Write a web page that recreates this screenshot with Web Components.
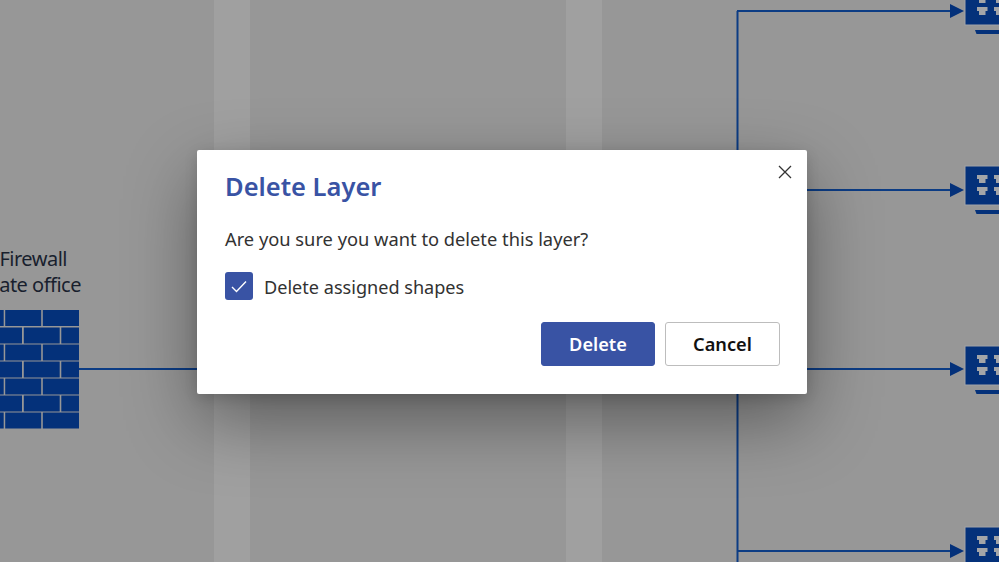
<!DOCTYPE html>
<html><head><meta charset="utf-8"><style>html,body{margin:0;padding:0;background:#979797}</style></head><body>
<x-stage>
  <x-diagram></x-diagram>
  <x-dialog heading="Delete Layer">
    Are you sure you want to delete this layer?
    <x-checkbox slot="option">Delete assigned shapes</x-checkbox>
    <x-button slot="actions" variant="primary">Delete</x-button>
    <x-button slot="actions" style="width:115px">Cancel</x-button>
  </x-dialog>
</x-stage>
<script>
const FONT = '"Noto Sans","Open Sans",sans-serif';
class XStage extends HTMLElement{constructor(){super();this.attachShadow({mode:'open'}).innerHTML=`<style>
:host{display:block;position:relative;width:999px;height:562px;overflow:hidden;background:#979797;font-family:${FONT}}
</style><slot></slot>`}}
customElements.define('x-stage',XStage);

function bricks(){
  const ys=[310,327.5,344.5,361.5,378.5,395.5,412.5],h=16;
  const odd=[[-20,3.7],[5.2,41.2],[42.8,79]],even=[[-20,22],[23.8,59.7],[61.3,79]];
  return ys.map((y,i)=>(i%2?even:odd).map(([a,b])=>`<rect x="${a}" y="${y}" width="${b-a}" height="${h}"/>`).join('')).join('');
}
function server(top){
  const p=(x,y)=>`<path d="M${x} ${y}h10.5v4h-2v4h-6.5v-4h-2z" fill="#a3a5a8"/>`;
  return `<g><rect x="965" y="${top}" width="40" height="39" fill="#04317a" stroke="#a2a4a8" stroke-width="1"/>
  <path d="M975 ${top+44}h30v4h-28.5z" fill="#04317a"/>
  ${p(977,top+9)}${p(994,top+9)}${p(977,top+21)}${p(994,top+21)}</g>`;
}
function branch(y,top){
  return `<path d="M737 ${y}H952" stroke="#0c3c84" stroke-width="2" fill="none"/>
  <path d="M950 ${y-7}L964 ${y}L950 ${y+7}z" fill="#04317a"/>`+server(top);
}
class XDiagram extends HTMLElement{constructor(){super();this.attachShadow({mode:'open'}).innerHTML=`<style>
:host{display:block;position:absolute;inset:0;color:#191f2e;font-size:20px;letter-spacing:-.5px;line-height:26px}
svg{position:absolute;inset:0;display:block}
.label{position:absolute;left:-40px;top:246px;width:121px;text-align:right;white-space:nowrap}
.label div:first-child{padding-right:14px}
</style>
<svg width="999" height="562" viewBox="0 0 999 562">
  <rect x="214" y="0" width="36" height="562" fill="#a0a0a0"/>
  <rect x="566" y="0" width="36" height="562" fill="#a0a0a0"/>
  <path d="M737.5 11V562" stroke="#0c3c84" stroke-width="2" fill="none"/>
  <path d="M79 369H400" stroke="#0c3c84" stroke-width="2" fill="none"/>
  ${branch(11,-14)}${branch(190,166)}${branch(369,346)}${branch(551,527)}
  <g fill="#04317a">${bricks()}</g>
</svg>
<div class="label"><div>Firewall</div><div>ate office</div></div>`}}
customElements.define('x-diagram',XDiagram);

class XDialog extends HTMLElement{constructor(){super();this.attachShadow({mode:'open'}).innerHTML=`<style>
:host{display:flex;flex-direction:column;box-sizing:border-box;position:absolute;left:197px;top:150px;width:610px;height:244px;padding:19px 27px 28px 28px;background:#fff;border-radius:2px;box-shadow:0 26px 70px rgba(0,0,0,.4),0 4px 14px rgba(0,0,0,.14);color:#323232}
h2{margin:0;font-size:25.5px;line-height:34px;font-weight:600;color:#3953a4}
.body{margin-top:22px;font-size:18.3px;line-height:28px}
.opt{margin-top:19px}
.act{margin-top:22px;display:flex;justify-content:flex-end;gap:10px}
button{position:absolute;right:15px;top:15px;width:14px;height:14px;padding:0;border:0;background:none;display:block}
svg{display:block}
</style>
<h2></h2>
<div class="body"><slot></slot></div>
<div class="opt"><slot name="option"></slot></div>
<div class="act"><slot name="actions"></slot></div>
<button aria-label="Close"><svg width="14" height="14" viewBox="0 0 14 14"><path d="M1 1L13 13M13 1L1 13" stroke="#333" stroke-width="1.3" fill="none"/></svg></button>`;
this.shadowRoot.querySelector('h2').textContent=this.getAttribute('heading')}}
customElements.define('x-dialog',XDialog);

class XCheckbox extends HTMLElement{constructor(){super();this.attachShadow({mode:'open'}).innerHTML=`<style>
:host{display:flex;align-items:center;gap:11px;font-size:18.1px;line-height:26px;color:#323232}
.box{width:28px;height:28px;border-radius:3px;background:#3953a4;display:flex;align-items:center;justify-content:center}
.t{padding-top:2px}
svg{display:block}
</style><span class="box"><svg width="16" height="13" viewBox="0 0 16 13"><path d="M1 7L5.5 11.5L15 1.5" stroke="#fff" stroke-width="1.4" fill="none"/></svg></span><span class="t"><slot></slot></span>`}}
customElements.define('x-checkbox',XCheckbox);

class XButton extends HTMLElement{constructor(){super();this.attachShadow({mode:'open'}).innerHTML=`<style>
:host{display:flex;align-items:center;justify-content:center;box-sizing:border-box;width:114px;height:44px;padding-bottom:1px;border-radius:3px;font-size:18.2px;font-weight:600;border:1px solid #bdbdbd;background:#fff;color:#111}
:host([variant=primary]){background:#3953a4;border-color:#3953a4;color:#fff}
</style><slot></slot>`}}
customElements.define('x-button',XButton);
</script>
</body></html>
